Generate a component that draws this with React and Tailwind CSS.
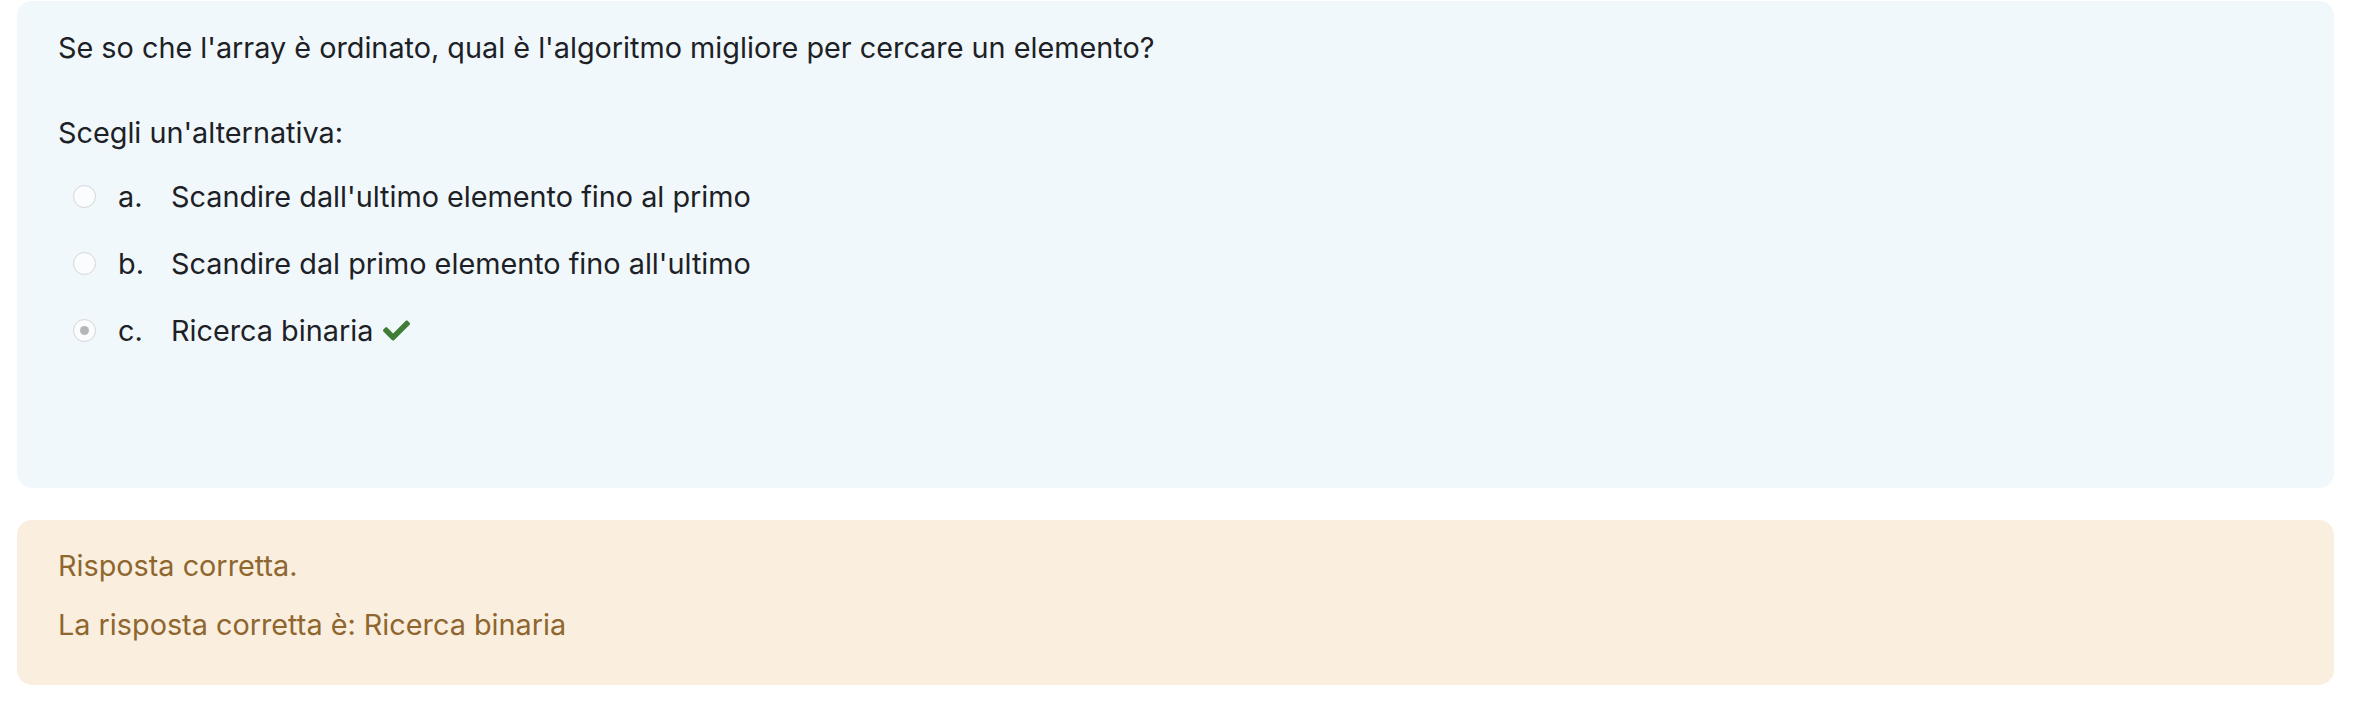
import React from 'react';
import { FaCheck } from 'react-icons/fa';

const OPTIONS = [
  { letter: 'a.', text: "Scandire dall'ultimo elemento fino al primo", checked: false },
  { letter: 'b.', text: "Scandire dal primo elemento fino all'ultimo", checked: false },
  { letter: 'c.', text: 'Ricerca binaria', checked: true, correct: true }
];

const Radio = ({ checked }) => (
  <span className="flex h-[23px] w-[23px] shrink-0 items-center justify-center rounded-full border border-[#d3d6d9] bg-[#fbfcfd]">
    {checked && <span className="h-[9px] w-[9px] rounded-full bg-[#b4b6b8]"></span>}
  </span>
);

const App = () => {
  return (
    <div
      className="min-h-screen bg-white pt-px pl-[17px] pr-[44px] text-[28.8px] leading-[44px] text-[#1d2125]"
      style={{ fontFamily: 'Inter, "Noto Sans", "Liberation Sans", sans-serif' }}
    >
      {/* Question */}
      <div className="rounded-[15px] bg-[#f0f8fc] px-[41px] pt-[25px] pb-[124px]">
        <p>Se so che l'array è ordinato, qual è l'algoritmo migliore per cercare un elemento?</p>
        <p className="mt-[41px]">Scegli un'alternativa:</p>
        <div className="mt-[8px]">
          {OPTIONS.map((opt) => (
            <div key={opt.letter} className="flex h-[67px] items-center pl-[15px]">
              <Radio checked={opt.checked} />
              <span className="ml-[22px] w-[53px]">{opt.letter}</span>
              <span>{opt.text}</span>
              {opt.correct && <FaCheck className="ml-[10px] text-[#3f7d36]" size={27} />}
            </div>
          ))}
        </div>
      </div>

      {/* Feedback */}
      <div className="mt-[32px] rounded-[15px] bg-[#faeedf] px-[41px] pt-[24px] pb-[38px] text-[#8e662e]">
        <p>Risposta corretta.</p>
        <p className="mt-[15px]">La risposta corretta è: Ricerca binaria</p>
      </div>
    </div>
  );
};

export default App;
